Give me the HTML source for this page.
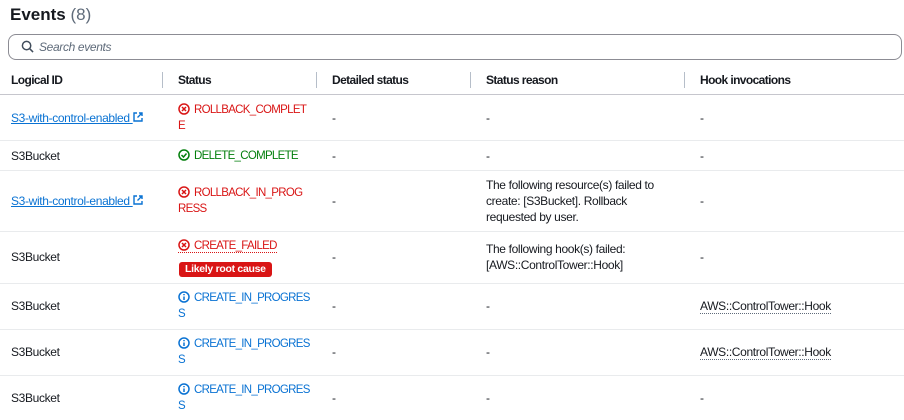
<!DOCTYPE html>
<html><head><style>
body{margin:0;width:904px;height:420px;overflow:hidden;background:#fff;font-family:"Liberation Sans",sans-serif;font-size:12px;color:#16191f;letter-spacing:-0.35px}
h2{position:absolute;left:10px;top:5px;margin:0;font-size:17px;font-weight:bold;color:#16191f;letter-spacing:0}
h2 span{font-weight:normal;color:#5f6b7a}
.search{position:absolute;left:8px;top:34px;width:892px;height:24px;border:1px solid #8c8c94;border-radius:8px}
.search i{position:absolute;left:30px;top:5px;color:#5f6b7a;font-size:12px}
.search svg{position:absolute;left:12px;top:5px}
.th{position:absolute;top:73px;font-weight:bold;font-size:12px;letter-spacing:-0.6px}
.dv{position:absolute;top:72px;width:1px;height:16px;background:#b6bec9}
.hr{position:absolute;left:0;width:904px;height:1px;background:#e9ebed}
.t{position:absolute;line-height:16px}
.link{color:#0972d3;text-decoration:underline}
.red,.grn,.blu{font-size:11.5px;letter-spacing:-0.7px}
.red{color:#d91515}.grn{color:#037f0c}.blu{color:#0972d3}
.dot{border-bottom:1px dotted #5f6b7a}
.red .dot{border-bottom-color:#d91515}
.badge{position:absolute;background:#d91515;color:#fff;font-size:10.5px;font-weight:bold;border-radius:3px;padding:1px 6px;line-height:13px;letter-spacing:-0.3px}
svg.ic{vertical-align:-2px;margin-right:4px}
</style></head><body>
<h2>Events <span>(8)</span></h2>
<div class="search"><svg width="13" height="13" viewBox="0 0 14 14"><circle cx="6" cy="6" r="4.5" fill="none" stroke="#414d5c" stroke-width="1.6"/><path d="M9.5 9.5L13 13" stroke="#414d5c" stroke-width="1.6"/></svg><i>Search events</i></div>
<div class="th" style="left:11px">Logical ID</div><div class="dv" style="left:162px"></div>
<div class="th" style="left:178px">Status</div><div class="dv" style="left:316px"></div>
<div class="th" style="left:332px">Detailed status</div><div class="dv" style="left:470px"></div>
<div class="th" style="left:486px">Status reason</div><div class="dv" style="left:684px"></div>
<div class="th" style="left:700px">Hook invocations</div>
<div class="hr" style="top:94px;background:#c6c6cd"></div>
<div class="hr" style="top:140px"></div><div class="hr" style="top:170px"></div><div class="hr" style="top:231px"></div><div class="hr" style="top:283px"></div><div class="hr" style="top:329px"></div><div class="hr" style="top:375px"></div>

<div class="t link" style="left:11px;top:110px">S3-with-control-enabled <svg width="10" height="10" viewBox="0 0 10 10"><path d="M4 1H1v8h8V6M6 1h3v3M9 1L4.5 5.5" fill="none" stroke="#0972d3" stroke-width="1.4"/></svg></div>
<div class="t red" style="left:178px;top:102px"><svg class="ic" width="12" height="12" viewBox="0 0 12 12"><circle cx="6" cy="6" r="5" fill="none" stroke="#d91515" stroke-width="1.5"/><path d="M4 4l4 4M8 4l-4 4" stroke="#d91515" stroke-width="1.5"/></svg>ROLLBACK_COMPLET<br>E</div>
<div class="t" style="left:332px;top:110px">-</div><div class="t" style="left:486px;top:110px">-</div><div class="t" style="left:700px;top:110px">-</div>

<div class="t" style="left:11px;top:148px">S3Bucket</div>
<div class="t grn" style="left:178px;top:148px"><svg class="ic" width="12" height="12" viewBox="0 0 12 12"><circle cx="6" cy="6" r="5" fill="none" stroke="#037f0c" stroke-width="1.5"/><path d="M3.5 6l2 2 3-3.5" fill="none" stroke="#037f0c" stroke-width="1.5"/></svg>DELETE_COMPLETE</div>
<div class="t" style="left:332px;top:148px">-</div><div class="t" style="left:486px;top:148px">-</div><div class="t" style="left:700px;top:148px">-</div>

<div class="t link" style="left:11px;top:193px">S3-with-control-enabled <svg width="10" height="10" viewBox="0 0 10 10"><path d="M4 1H1v8h8V6M6 1h3v3M9 1L4.5 5.5" fill="none" stroke="#0972d3" stroke-width="1.4"/></svg></div>
<div class="t red" style="left:178px;top:185px"><svg class="ic" width="12" height="12" viewBox="0 0 12 12"><circle cx="6" cy="6" r="5" fill="none" stroke="#d91515" stroke-width="1.5"/><path d="M4 4l4 4M8 4l-4 4" stroke="#d91515" stroke-width="1.5"/></svg>ROLLBACK_IN_PROG<br>RESS</div>
<div class="t" style="left:332px;top:193px">-</div>
<div class="t" style="left:486px;top:177px">The following resource(s) failed to<br>create: [S3Bucket]. Rollback<br>requested by user.</div>
<div class="t" style="left:700px;top:193px">-</div>

<div class="t" style="left:11px;top:249px">S3Bucket</div>
<div class="t red" style="left:178px;top:238px"><span class="dot"><svg class="ic" width="12" height="12" viewBox="0 0 12 12"><circle cx="6" cy="6" r="5" fill="none" stroke="#d91515" stroke-width="1.5"/><path d="M4 4l4 4M8 4l-4 4" stroke="#d91515" stroke-width="1.5"/></svg>CREATE_FAILED</span></div>
<div class="badge" style="left:179px;top:262px">Likely root cause</div>
<div class="t" style="left:332px;top:249px">-</div>
<div class="t" style="left:486px;top:241px">The following hook(s) failed:<br>[AWS::ControlTower::Hook]</div>
<div class="t" style="left:700px;top:249px">-</div>

<div class="t" style="left:11px;top:298px">S3Bucket</div>
<div class="t blu" style="left:178px;top:290px"><svg class="ic" width="12" height="12" viewBox="0 0 12 12"><circle cx="6" cy="6" r="5" fill="none" stroke="#0972d3" stroke-width="1.5"/><path d="M6 5.5V9M6 3v1.3" stroke="#0972d3" stroke-width="1.5"/></svg>CREATE_IN_PROGRES<br>S</div>
<div class="t" style="left:332px;top:298px">-</div><div class="t" style="left:486px;top:298px">-</div>
<div class="t" style="left:700px;top:298px"><span class="dot">AWS::ControlTower::Hook</span></div>

<div class="t" style="left:11px;top:344px">S3Bucket</div>
<div class="t blu" style="left:178px;top:336px"><svg class="ic" width="12" height="12" viewBox="0 0 12 12"><circle cx="6" cy="6" r="5" fill="none" stroke="#0972d3" stroke-width="1.5"/><path d="M6 5.5V9M6 3v1.3" stroke="#0972d3" stroke-width="1.5"/></svg>CREATE_IN_PROGRES<br>S</div>
<div class="t" style="left:332px;top:344px">-</div><div class="t" style="left:486px;top:344px">-</div>
<div class="t" style="left:700px;top:344px"><span class="dot">AWS::ControlTower::Hook</span></div>

<div class="t" style="left:11px;top:390px">S3Bucket</div>
<div class="t blu" style="left:178px;top:382px"><svg class="ic" width="12" height="12" viewBox="0 0 12 12"><circle cx="6" cy="6" r="5" fill="none" stroke="#0972d3" stroke-width="1.5"/><path d="M6 5.5V9M6 3v1.3" stroke="#0972d3" stroke-width="1.5"/></svg>CREATE_IN_PROGRES<br>S</div>
<div class="t" style="left:332px;top:390px">-</div><div class="t" style="left:486px;top:390px">-</div><div class="t" style="left:700px;top:390px">-</div>
</body></html>
